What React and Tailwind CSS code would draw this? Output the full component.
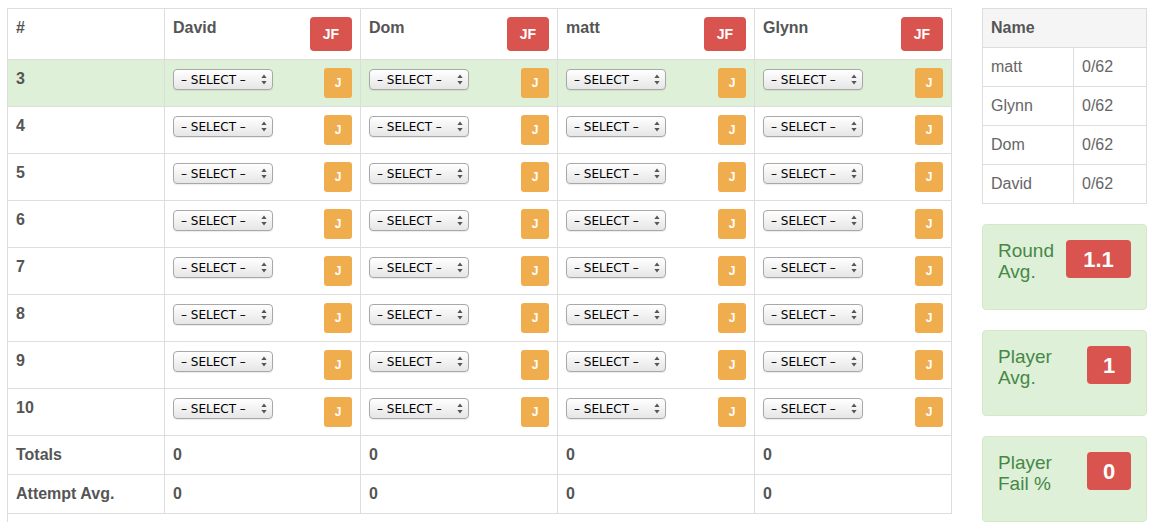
import React from "react";

const players = ["David", "Dom", "matt", "Glynn"];
const colW = ["w-[196px]", "w-[197px]", "w-[197px]", "w-[197px]"];
const rows = [3, 4, 5, 6, 7, 8, 9, 10];

function Select() {
  return (
    <div className="flex h-[21px] w-[100px] items-center rounded-[4px] border border-[#a8a8a8] bg-gradient-to-b from-white to-[#e6e6e6] pl-[7px] pr-[5px] text-[12px] font-normal leading-none text-black shadow-[0_1px_1px_rgba(0,0,0,0.08)]" style={{ fontFamily: '"DejaVu Sans", sans-serif' }}>
      <span className="flex-1 whitespace-nowrap">– SELECT –</span>
      <svg width="6" height="11" viewBox="0 0 6 11">
        <path d="M3 0.5 L5.6 4 L0.4 4 Z" fill="#555" />
        <path d="M3 10.5 L5.6 7 L0.4 7 Z" fill="#555" />
      </svg>
    </div>
  );
}

function Cell({ w, children, className = "" }) {
  return (
    <div className={`${w} shrink-0 border-r border-[#dddddd] px-[8px] ${className}`}>{children}</div>
  );
}

function StatBox({ l1, l2, value, badgeW }) {
  return (
    <div className="flex h-[86px] w-[165px] items-start justify-between rounded-[4px] border border-[#d6e9c6] bg-[#dff0d8] px-[15px] pt-[15px]">
      <div className="text-[19px] leading-[21px] text-[#468847]">
        <div>{l1}</div>
        <div>{l2}</div>
      </div>
      <div className={`flex h-[38px] ${badgeW} items-center justify-center rounded-[4px] bg-[#d9534f] text-[22px] font-bold text-white`}>
        {value}
      </div>
    </div>
  );
}

export default function App() {
  return (
    <div className="flex bg-white pl-[7px] pt-[8px]" style={{ fontFamily: '"Liberation Sans", Arial, sans-serif' }}>
      {/* Main table */}
      <div className="w-[945px] shrink-0 border-l border-t border-[#dddddd] text-[16px] font-bold leading-[22px] text-[#555555]">
        {/* header */}
        <div className="flex h-[51px] border-b border-[#dddddd]">
          <Cell w="w-[157px]" className="pt-[8px]">#</Cell>
          {players.map((p, i) => (
            <Cell key={p} w={colW[i]} className="flex items-start justify-between pt-[8px]">
              <span>{p}</span>
              <div className="flex h-[34px] w-[42px] items-center justify-center rounded-[4px] bg-[#d9534f] text-[14px] font-bold text-white">JF</div>
            </Cell>
          ))}
        </div>
        {rows.map((r) => (
          <div key={r} className={`flex h-[47px] border-b border-[#dddddd] ${r === 3 ? "bg-[#dff0d8]" : ""}`}>
            <Cell w="w-[157px]" className="pt-[8px]">{r}</Cell>
            {players.map((p, i) => (
              <Cell key={p} w={colW[i]} className="flex items-start justify-between pt-[8px]">
                <div className="pt-[1px]">
                  <Select />
                </div>
                <div className="flex h-[30px] w-[28px] items-center justify-center rounded-[3px] bg-[#f0ad4e] text-[12px] font-bold text-white">J</div>
              </Cell>
            ))}
          </div>
        ))}
        {["Totals", "Attempt Avg."].map((label) => (
          <div key={label} className="flex h-[39px] border-b border-[#dddddd]">
            <Cell w="w-[157px]" className="pt-[8px]">{label}</Cell>
            {players.map((p, i) => (
              <Cell key={p} w={colW[i]} className="pt-[8px]">0</Cell>
            ))}
          </div>
        ))}
      </div>

      {/* Right column */}
      <div className="ml-[30px] flex w-[165px] shrink-0 flex-col">
        <div className="border-l border-t border-[#dddddd] text-[16px] leading-[22px] text-[#666666]">
          <div className="flex h-[39px] items-start border-b border-r border-[#dddddd] bg-[#f5f5f5] px-[8px] pt-[8px] font-bold text-[#555555]">
            Name
          </div>
          {["matt", "Glynn", "Dom", "David"].map((n) => (
            <div key={n} className="flex h-[39px] border-b border-[#dddddd]">
              <div className="w-[91px] shrink-0 border-r border-[#dddddd] px-[8px] pt-[8px]">{n}</div>
              <div className="w-[73px] shrink-0 border-r border-[#dddddd] px-[8px] pt-[8px]">0/62</div>
            </div>
          ))}
        </div>
        <div className="mt-[20px] flex flex-col gap-[20px]">
          <StatBox l1="Round" l2="Avg." value="1.1" badgeW="w-[65px]" />
          <StatBox l1="Player" l2="Avg." value="1" badgeW="w-[44px]" />
          <StatBox l1="Player" l2="Fail %" value="0" badgeW="w-[44px]" />
        </div>
      </div>
    </div>
  );
}
